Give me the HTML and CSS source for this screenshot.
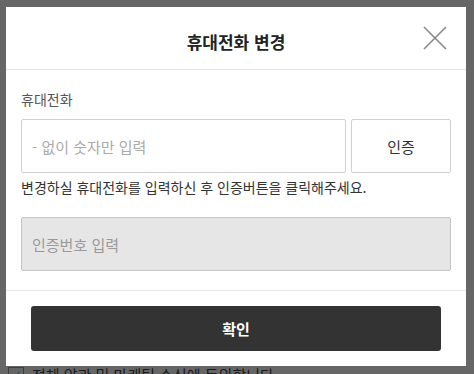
FILE: index.html
```html
<!DOCTYPE html>
<html lang="ko">
<head>
  <meta charset="UTF-8"/>
  <meta name="viewport" content="width=device-width, initial-scale=1.0"/>
  <title>휴대전화 변경</title>
  <link rel="stylesheet" href="styles.css">
</head>
<body>
  <div class="page">
    <label class="agree"><span class="check">&#10003;</span>전체 약관 및 마케팅 수신에 동의합니다.</label>
  </div>

  <div class="dim">
    <div class="modal">
      <div class="modal-head">
        <h1>휴대전화 변경</h1>
        <button class="close" type="button" aria-label="닫기">
          <svg width="24" height="24" viewBox="0 0 24 24"><path d="M1 1L23 23M23 1L1 23" stroke="#888" stroke-width="1.6" fill="none"/></svg>
        </button>
      </div>

      <div class="modal-body">
        <div class="label">휴대전화</div>
        <div class="row">
          <input class="field" type="text" placeholder="- 없이 숫자만 입력">
          <button class="btn-line" type="button">인증</button>
        </div>
        <p class="hint">변경하실 휴대전화를 입력하신 후 인증버튼을 클릭해주세요.</p>
        <input class="field field-off" type="text" placeholder="인증번호 입력" disabled>
      </div>

      <div class="modal-foot">
        <button class="btn-dark" type="button">확인</button>
      </div>
    </div>
  </div>
</body>
</html>
```

FILE: styles.css
```css
body {
  margin: 0;
  font-family: "Noto Sans CJK KR", "Noto Sans", sans-serif;
  background-color: #ffffff;
  color: #333;
}

.page {
  height: 374px;
  display: flex;
  align-items: flex-end;
  padding: 0 8px;
}

.agree {
  display: flex;
  align-items: center;
  gap: 8px;
  font-size: 15px;
  color: #444;
  margin-bottom: -12px;
  line-height: 22px;
}

.check {
  width: 14px;
  height: 14px;
  border: 1px solid #999;
  font-size: 11px;
  line-height: 14px;
  text-align: center;
  color: #999;
}

/* dimmed layer over the page */
.dim {
  position: fixed;
  inset: 0;
  background: rgba(0, 0, 0, 0.6);
  padding: 7px 8px 0 6px;
}

.modal {
  background: #fff;
}

.modal-head {
  height: 62px;
  border-bottom: 1px solid #e5e5e5;
  display: flex;
  align-items: center;
  justify-content: center;
  position: relative;
}

.modal-head h1 {
  margin: 0;
  font-size: 17px;
  font-weight: bold;
  color: #222;
  padding-top: 6px;
}

.close {
  position: absolute;
  right: 19px;
  top: 19px;
  border: 0;
  background: none;
  padding: 0;
  width: 24px;
  height: 24px;
}

.modal-body {
  padding: 18px 15px 19px 15px;
  border-bottom: 1px solid #e8e8e8;
}

.label {
  font-size: 14px;
  color: #555;
  line-height: 22px;
  margin-bottom: 9px;
}

.row {
  display: flex;
  gap: 5px;
}

.field {
  box-sizing: border-box;
  flex: 1;
  height: 54px;
  border: 1px solid #d0d0d0;
  border-radius: 2px;
  padding: 0 10px;
  font-family: inherit;
  font-size: 15px;
  color: #333;
  outline: none;
}

.field::placeholder {
  color: #aaa;
}

.btn-line {
  width: 100px;
  height: 54px;
  border: 1px solid #d0d0d0;
  border-radius: 2px;
  background: #fff;
  font-family: inherit;
  font-size: 15px;
  color: #333;
}

.hint {
  margin: 4px 0 20px;
  font-size: 14px;
  color: #333;
  line-height: 20px;
}

.field-off {
  display: block;
  width: 100%;
  background: #e6e6e6;
  border-color: #c4c4c4;
}

.field-off::placeholder {
  color: #999;
}

.modal-foot {
  padding: 15px 25px;
}

.btn-dark {
  display: block;
  width: 100%;
  height: 45px;
  border: 0;
  border-radius: 3px;
  background: #333;
  color: #fff;
  font-family: inherit;
  font-size: 15px;
  font-weight: bold;
}
```
